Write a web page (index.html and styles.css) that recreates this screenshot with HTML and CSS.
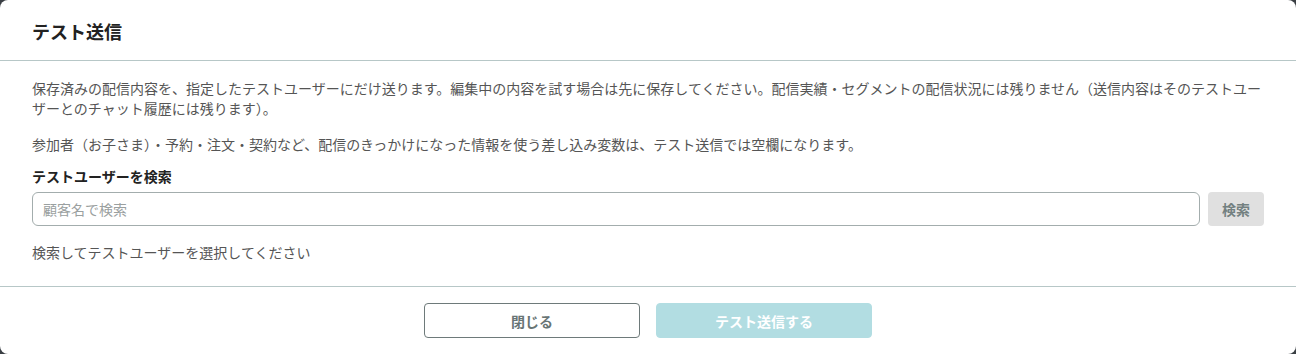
FILE: index.html
```html
<!DOCTYPE html>
<html lang="ja">
<head>
<meta charset="utf-8">
<title>テスト送信</title>
<link rel="stylesheet" href="styles.css">
</head>
<body>
<div class="modal">
  <div class="modal-header">
    <h2 class="modal-title">テスト送信</h2>
  </div>
  <div class="modal-body">
    <p class="desc">保存済みの配信内容を、指定したテストユーザーにだけ送ります。編集中の内容を試す場合は先に保存してください。配信実績・セグメントの配信状況には残りません（送信内容はそのテストユーザーとのチャット履歴には残ります）。</p>
    <p class="desc">参加者（お子さま）・予約・注文・契約など、配信のきっかけになった情報を使う差し込み変数は、テスト送信では空欄になります。</p>
    <label class="field-label" for="q">テストユーザーを検索</label>
    <div class="search-row">
      <input id="q" class="search-input" type="text" placeholder="顧客名で検索">
      <button class="btn-search" type="button">検索</button>
    </div>
    <p class="hint">検索してテストユーザーを選択してください</p>
  </div>
  <div class="modal-footer">
    <button class="btn btn-close" type="button">閉じる</button>
    <button class="btn btn-submit" type="button" disabled>テスト送信する</button>
  </div>
</div>
</body>
</html>
```
FILE: styles.css
```css
* { box-sizing: border-box; }
html, body { margin: 0; padding: 0; }
body {
  background: #3a3f44;
  font-family: "Noto Sans CJK JP", "Noto Sans", sans-serif;
  width: 1296px;
  height: 354px;
  overflow: hidden;
}
.modal {
  background: #fff;
  width: 1296px;
  height: 354px;
  border-radius: 8px;
  display: flex;
  flex-direction: column;
}
.modal-header {
  height: 61px;
  padding: 0 32px;
  display: flex;
  align-items: center;
  border-bottom: 1px solid #b7c7c7;
}
.modal-title {
  margin: 0;
  font-size: 18px;
  font-weight: 700;
  color: #222;
  line-height: 24px;
  padding-top: 2px;
}
.modal-body {
  padding: 17px 32px 0;
  height: 226px;
  border-bottom: 1px solid #b7c7c7;
}
.desc {
  margin: 0 0 16px;
  font-size: 14px;
  line-height: 20px;
  color: #555;
}
.field-label {
  display: block;
  font-size: 14px;
  font-weight: 700;
  line-height: 20px;
  color: #222;
  margin-top: -4px;
  margin-bottom: 6px;
}
.search-row {
  display: flex;
  gap: 8px;
}
.search-input {
  flex: 1;
  height: 34px;
  border: 1px solid #a3adad;
  border-radius: 6px;
  padding: 0 10px;
  font-family: inherit;
  font-size: 14px;
  color: #333;
  outline: none;
}
.search-input::placeholder { color: #9aa0a0; }
.btn-search {
  width: 56px;
  height: 34px;
  border: none;
  border-radius: 4px;
  background: #e0e0e0;
  color: #738080;
  font-family: inherit;
  font-size: 14px;
  font-weight: 700;
}
.hint {
  margin: 16px 0 0;
  font-size: 14px;
  line-height: 20px;
  color: #555;
}
.modal-footer {
  flex: 1;
  display: flex;
  justify-content: center;
  align-items: flex-start;
  gap: 16px;
  padding-top: 16px;
}
.btn {
  width: 216px;
  height: 35px;
  border-radius: 4px;
  font-family: inherit;
  font-size: 14px;
  font-weight: 700;
}
.btn-close {
  background: #fff;
  border: 1px solid #6e7a7a;
  color: #687575;
}
.btn-submit {
  background: #b2dde2;
  border: 1px solid #b2dde2;
  color: #fff;
}
```
